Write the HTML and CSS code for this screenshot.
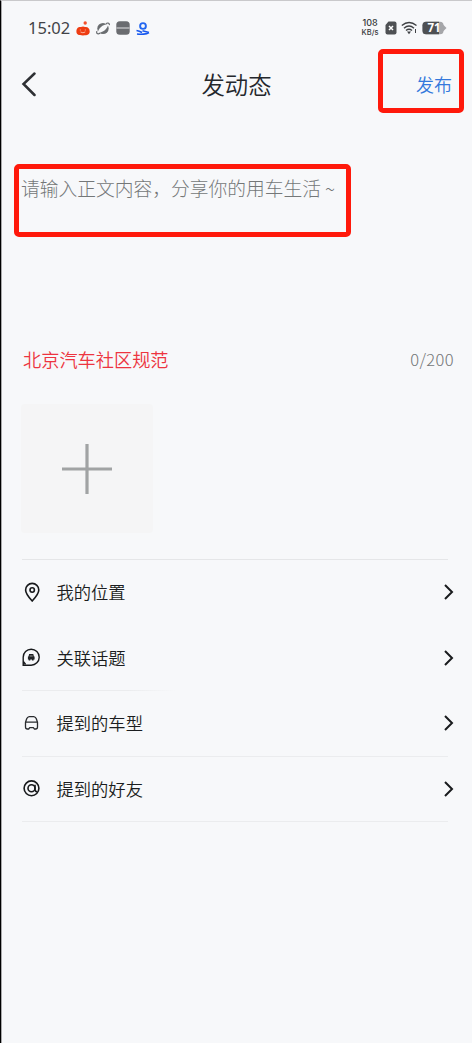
FILE: index.html
```html
<!DOCTYPE html>
<html lang="zh-CN">
<head>
<meta charset="utf-8">
<title>发动态</title>
<link rel="stylesheet" href="styles.css">
</head>
<body>
<div class="screen">
  <div class="status">
    <span class="time">15:02</span>
    <svg class="s-icon" width="14" height="15" viewBox="0 0 14 15"><circle cx="9.200" cy="2" r="1.700" fill="#f4512c"/><path d="M.4 10.500C.4 6.500 3 5.500 5 6c1.300-.7 2.800-.7 4 0 2.500-.5 4.700 1 4.700 4.500 0 3-2 3.900-6.700 3.900S.4 13.500.4 10.500Z" fill="#ee3c12"/><path d="M4.300 9.500v-1M9.300 9.500v-1M4.500 11q2.400 1.500 4.800 0" stroke="#ffb49c" fill="none"/></svg>
    <svg class="s-icon" width="14" height="13" viewBox="0 0 14 13"><ellipse cx="7" cy="6.500" rx="5.700" ry="5.600" fill="#6a6d70"/><path d="M1.800 10.800C2 6.500 7 2 12.200 2.200 12 6.500 6.500 11 1.800 10.800Z" fill="#f7f8fa"/><path d="M4 11.300C1.500 12.700.2 11.500.9 9.200M10 1.500c2.200-1.200 3.800-.3 3.200 1.700" stroke="#5c5f63" stroke-width="1.100" fill="none"/></svg>
    <svg class="s-icon" width="14" height="14" viewBox="0 0 14 14"><rect x=".3" y=".3" width="13.400" height="13.400" rx="3.500" fill="#6a6c70"/><path d="M.5 7h13" stroke="#e1e2e4" fill="none"/></svg>
    <svg class="s-icon" width="14" height="13" viewBox="0 0 14 13"><circle cx="7" cy="4" r="2.900" fill="none" stroke="#2467f0" stroke-width="1.900"/><path d="M.5 8.500c2 .3 3.800 1 5.500 2M6.500 8.800 13 10.500M1 12c4 .5 9 .5 12-1.500" stroke="#1657ee" stroke-width="1.600" fill="none"/></svg>
    <span class="spacer"></span>
    <span class="speed"><b>108</b><b>KB/s</b></span>
    <svg class="sim" width="12" height="14" viewBox="0 0 12 14"><path d="M3.500.5H9.500Q11.500.5 11.500 2.500V11.500Q11.500 13.500 9.500 13.500H2.500Q.5 13.500.5 11.500V4Z" fill="#4e5053"/><path d="m4 5 4 4M8 5 4 9" stroke="#fff" stroke-width="1.500"/></svg>
    <svg class="wifi" width="17" height="14" viewBox="0 0 17 14"><g fill="none" stroke="#3f4144" stroke-width="1.400"><path d="M.8 4.500Q8 -1.500 15.500 4.500M3 7.200Q8 2.900 13 7.200M5 9.500Q8 7 11 9.500"/></g><path d="m6 10.500 2 2.800 2-2.800Z" fill="#3f4144"/><path d="M14.500 8v4" stroke="#3f4144"/></svg>
    <svg class="battery" width="25" height="14" viewBox="0 0 25 14"><rect x=".5" y=".8" width="21" height="12.400" rx="3.500" fill="#a5a6a9"/><path d="M4 .8H17V13.200H4Q.5 13.200.5 9.700V4.300Q.5.800 4 .8Z" fill="#4e5053"/><path d="M20 2.500 24.500 7 20 11.500Z" fill="#a5a6a9"/><text x="12" y="11" text-anchor="middle" class="level">71</text></svg>
  </div>

  <div class="nav">
    <svg class="back" width="15" height="26" viewBox="0 0 15 26"><path d="M13.500 2.500 2.500 13 13.500 24" fill="none" stroke="#2e3034" stroke-width="2.500" stroke-linecap="round"/></svg>
    <h1 class="title">发动态</h1>
    <span class="publish">发布</span>
  </div>

  <div class="editor">请输入正文内容，分享你的用车生活<span class="tilde">~</span></div>

  <div class="meta"><span class="rules">北京汽车社区规范</span><span class="count">0/200</span></div>

  <div class="upload"><svg width="50" height="50" viewBox="0 0 50 50"><path d="M25 0v50M0 25h50" stroke="#a1a3a4" stroke-width="3.200"/></svg></div>

  <div class="list">
    <div class="row plain">
      <svg class="icon" width="20" height="20" viewBox="0 0 20 20"><g fill="none" stroke="#17191b" stroke-width="1.600"><path d="M10.200 19C6 14.500 3.600 11.300 3.600 8a6.600 6.600 0 0 1 13.200 0C16.800 11.300 14.400 14.500 10.200 19Z"/><circle cx="10.200" cy="8" r="2.200"/></g></svg>
      <span class="label">我的位置</span>
      <svg class="arrow" width="11" height="18" viewBox="0 0 11 18"><path d="m2 2 7 7-7 7"/></svg>
    </div>
    <div class="row faint">
      <svg class="icon" width="20" height="20" viewBox="0 0 20 20"><path d="M1.200 17.200V9.200a8 8 0 1 1 8 8ZM1.500 13.700l2 2.500" fill="none" stroke="#17191b" stroke-width="1.400"/><path d="M7.100 6h4.200l.6 2.500h.7v3h-1v1H9.900v-1H8.300v1H6.700v-1h-.8v-3h.6Z" fill="#202225"/><path d="M7.700 8h3" stroke="#999"/></svg>
      <span class="label">关联话题</span>
      <svg class="arrow" width="11" height="18" viewBox="0 0 11 18"><path d="m2 2 7 7-7 7"/></svg>
    </div>
    <div class="row">
      <svg class="icon" width="20" height="20" viewBox="0 0 20 20"><path d="M3.500 9.200 4.700 5.800Q5.300 4 7.200 3.600h4.600q1.900.4 2.500 2.200l1.200 3.400V14q0 2-1.900 2H12.300l-.9-1.300H7.700L6.700 16H5.400Q3.500 16 3.500 14ZM3.700 9.200H15.300" fill="none" stroke="#292b2e" stroke-width="1.300" stroke-linejoin="round"/></svg>
      <span class="label">提到的车型</span>
      <svg class="arrow" width="11" height="18" viewBox="0 0 11 18"><path d="m2 2 7 7-7 7"/></svg>
    </div>
    <div class="row">
      <svg class="icon" width="20" height="20" viewBox="0 0 20 20"><g fill="none" stroke="#17191b" stroke-width="1.600"><circle cx="9.500" cy="9.300" r="7.400"/><circle cx="9.500" cy="9.300" r="3.500"/><path d="M13 5.700v5.200q.5 1.600 2.300 2"/></g></svg>
      <span class="label">提到的好友</span>
      <svg class="arrow" width="11" height="18" viewBox="0 0 11 18"><path d="m2 2 7 7-7 7"/></svg>
    </div>
  </div>

  <div class="highlight on-publish"></div>
  <div class="highlight on-editor"></div>
</div>
</body>
</html>
```
FILE: styles.css
```css
* { box-sizing: border-box; }
body {
  margin: 0;
  font-family: "Noto Sans CJK SC", sans-serif;
  color: #1b1d20;
}
.screen {
  position: relative;
  width: 472px;
  height: 1043px;
  background: #f7f8fa;
  border-top: 1px solid #c9c9cb;
  border-left: 1px solid #000;
  box-shadow: inset 1px 0 #a9a9aa;
  overflow: hidden;
}
.status {
  display: flex;
  align-items: center;
  height: 54px;
  padding: 0 25px 0 27px;
}
.time {
  width: 42px;
  margin-right: 6px;
  font: 16.500px/20px "Noto Sans", sans-serif;
  color: #414347;
  white-space: nowrap;
}
.s-icon { flex: none; margin-right: 6px; }
.spacer { flex: 1; }
.speed {
  width: 20px;
  display: flex;
  flex-direction: column;
  align-items: center;
  margin-right: 5px;
  color: #36383b;
}
.speed b {
  font: 500 9px/10px Inter, sans-serif;
  height: 10px;
  white-space: nowrap;
}
.speed b + b { font-size: 7.500px; }
.sim { margin-right: 4px; }
.wifi { margin-right: 4px; }
.level { font: bold 11.500px "Noto Sans", sans-serif; fill: #fff; }
.nav {
  display: grid;
  grid-template-columns: 80px 1fr 80px;
  align-items: center;
  height: 58px;
  padding: 0 20px 0 20px;
}
.title {
  margin: 0;
  text-align: center;
  font-size: 23.400px;
  line-height: 34px;
  font-weight: 350;
  color: #24272c;
}
.publish {
  text-align: right;
  font-size: 18px;
  line-height: 26px;
  font-weight: 350;
  color: #3478dc;
}
.editor {
  height: 204px;
  margin-top: 61px;
  padding-left: 20px;
  font-size: 18.750px;
  line-height: 28px;
  font-weight: 300;
  color: #747778;
  white-space: nowrap;
}
.tilde { margin-left: 4px; }
.meta {
  display: flex;
  justify-content: space-between;
  align-items: center;
  height: 28px;
  margin: -33px 0 31px;
  padding: 0 18px 0 22px;
}
.rules { font-size: 18.200px; line-height: 28px; font-weight: 350; color: #ed3440; }
.count {
  font: 300 16.500px/28px "Noto Sans CJK SC", sans-serif;
  letter-spacing: .4px;
  color: #747677;
}
.upload {
  display: flex;
  align-items: center;
  justify-content: center;
  width: 132px;
  height: 129px;
  margin: 0 0 26px 20px;
  background: #f5f5f6;
  border-radius: 4px;
}
.list {
  margin: 0 24px 0 21px;
  border-top: 1px solid #e5e6e8;
}
.row {
  display: flex;
  align-items: center;
  height: 65.500px;
  border-bottom: 1px solid #ebecee;
}
.row.plain { border-color: transparent; }
.row.faint { border-image: linear-gradient(90deg, #ebecee 25%, #f7f8fa 36%) 1; }
.icon { flex: none; margin-right: 14.500px; }
.label { flex: 1; font-size: 17.300px; line-height: 26px; font-weight: 350; }
.arrow { margin-right: -6px; fill: none; stroke: #191b1d; stroke-width: 2; }
.highlight {
  position: absolute;
  border: 5px solid #ff190b;
  border-radius: 5px;
}
.on-publish { left: 377px; top: 48px; width: 86px; height: 64px; }
.on-editor { left: 13px; top: 163px; width: 337px; height: 73px; }
```
